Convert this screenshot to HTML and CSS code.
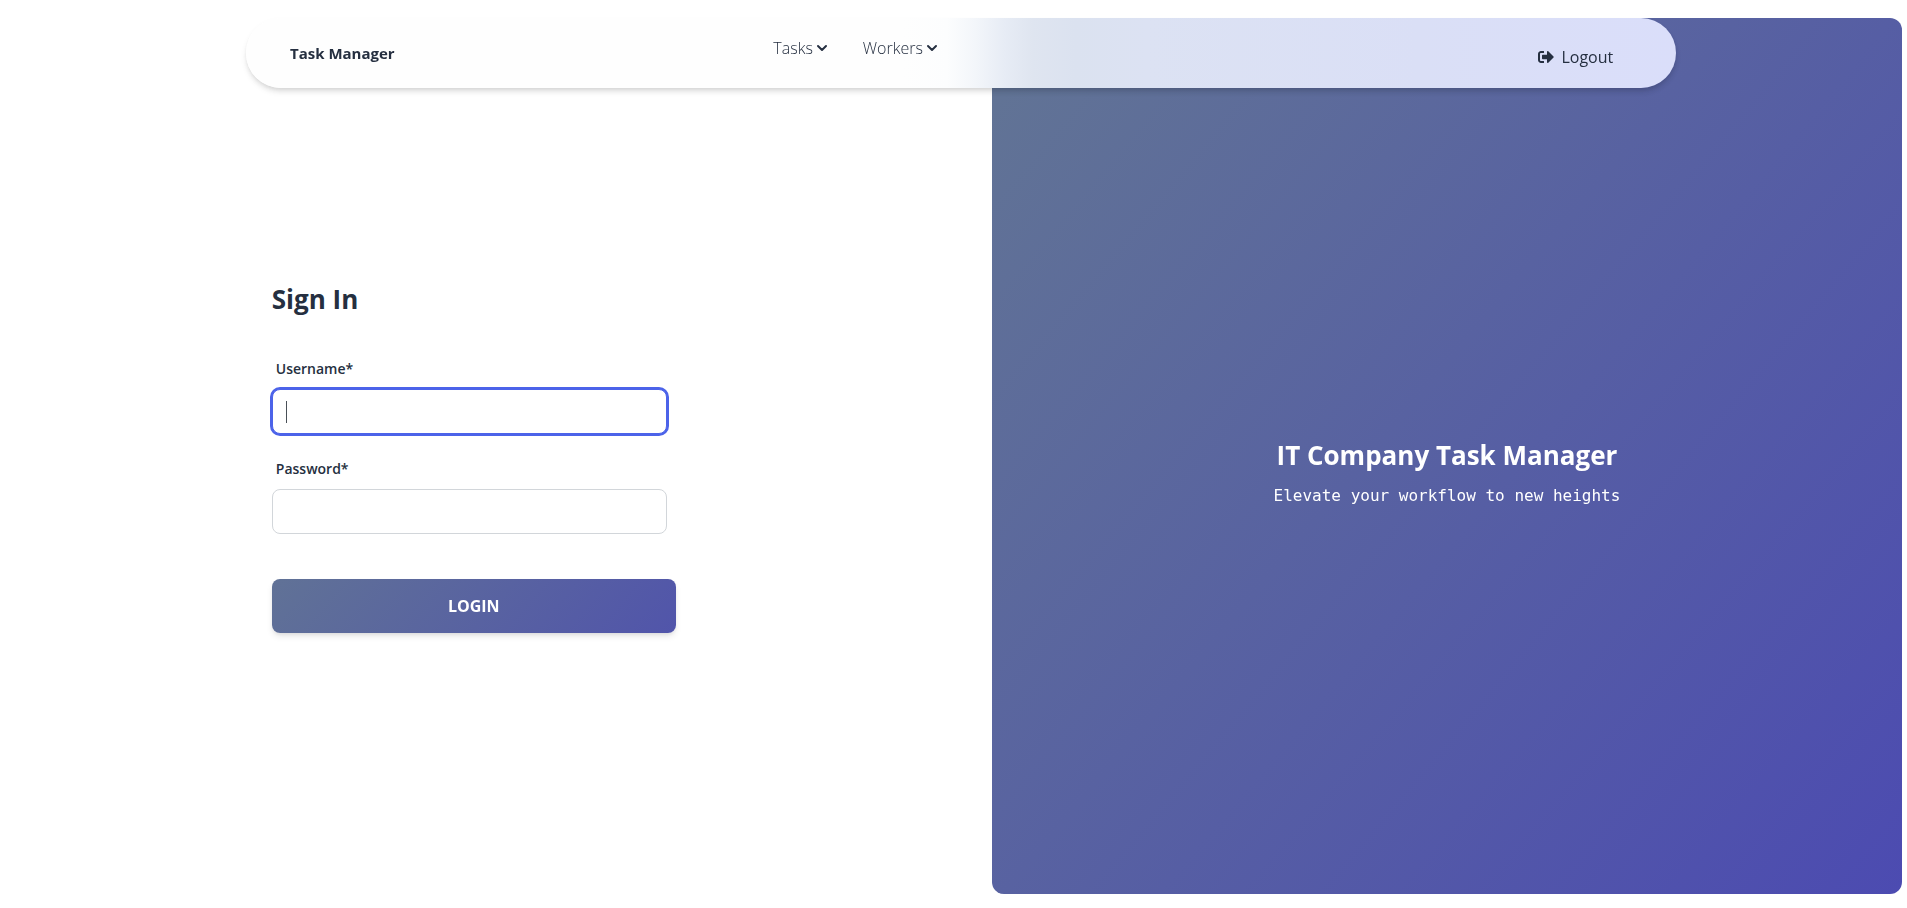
FILE: index.html
```html
<!DOCTYPE html>
<html lang="en">
<head>
  <meta charset="utf-8">
  <meta name="viewport" content="width=device-width, initial-scale=1">
  <title>Task Manager – Sign In</title>
  <link rel="stylesheet" href="styles.css">
</head>
<body>
  <header class="navbar">
    <a class="brand" href="#">Task Manager</a>
    <nav class="menu" aria-label="Main">
      <button class="menu-item" type="button">Tasks
        <svg class="chevron" viewBox="0 0 12 8" aria-hidden="true"><path d="M2 2 6 6l4-4"/></svg>
      </button>
      <button class="menu-item" type="button">Workers
        <svg class="chevron" viewBox="0 0 12 8" aria-hidden="true"><path d="M2 2 6 6l4-4"/></svg>
      </button>
    </nav>
    <a class="logout" href="#">
      <svg class="logout-icon" viewBox="0 0 512 512" aria-hidden="true"><path d="M497 273 329 441c-15 15-41 4.500-41-17v-96H152c-13.300 0-24-10.700-24-24v-96c0-13.300 10.700-24 24-24h136V88c0-21.400 25.900-32 41-17l168 168c9.300 9.400 9.300 24.600 0 34zM192 436v-40c0-6.600-5.400-12-12-12H96c-17.700 0-32-14.300-32-32V160c0-17.700 14.300-32 32-32h84c6.600 0 12-5.400 12-12V76c0-6.600-5.400-12-12-12H96c-53 0-96 43-96 96v192c0 53 43 96 96 96h84c6.600 0 12-5.400 12-12z"/></svg>
      Logout
    </a>
  </header>
  <main class="page">
    <section class="signin">
      <h1 class="title">Sign In</h1>
      <form class="form">
        <label class="label" for="username">Username*</label>
        <input class="field" id="username" type="text" autocomplete="off" autofocus>
        <label class="label" for="password">Password*</label>
        <input class="field" id="password" type="password" autocomplete="off">
        <button class="login" type="submit">LOGIN</button>
      </form>
    </section>
    <aside class="hero">
      <h2 class="hero-title">IT Company Task Manager</h2>
      <p class="hero-text">Elevate your workflow to new heights</p>
    </aside>
  </main>
</body>
</html>
```
FILE: styles.css
```css
* {
  box-sizing: border-box;
}

body {
  margin: 0;
  background: #fff;
  color: #252f40;
  font-family: "Open Sans", sans-serif;
  font-size: 16px;
  line-height: 24px;
}

h1, h2, p {
  margin: 0;
}

a {
  color: inherit;
  text-decoration: none;
}

button, input {
  font: inherit;
  color: inherit;
}

.navbar {
  position: absolute;
  top: 18px;
  left: 12.9%;
  z-index: 2;
  width: 75%;
  height: 70px;
  padding: 0 63px 0 44px;
  display: grid;
  grid-template-columns: 1fr auto 1fr;
  align-items: center;
  border-radius: 35px;
  background: linear-gradient(90deg, #fefefe 46%, #fcfdfe 49%, #f3f6fa 51%, #e7ecf5 53%, #dfe5f0 55%, #dbe2f0 58%, #dce2f3 63%, #dadff6 82%, #dadefa);
  box-shadow: 0 4px 7px -1px rgba(0, 0, 0, 0.11), 0 2px 4px -1px rgba(0, 0, 0, 0.07), 0 4px 6px rgba(0, 0, 0, 0.04);
}

.brand {
  font-size: 15px;
  font-weight: 700;
}

.menu {
  display: flex;
  gap: 35px;
  padding: 0 192px 10px 0;
}

.menu-item {
  display: flex;
  align-items: center;
  gap: 3px;
  padding: 0;
  border: 0;
  background: none;
  font-weight: 300;
}

.chevron {
  width: 12px;
  height: 8px;
  fill: none;
  stroke: #252f40;
  stroke-width: 2;
  stroke-linecap: round;
  stroke-linejoin: round;
}

.logout {
  display: flex;
  align-items: center;
  justify-self: end;
  gap: 7px;
  padding-top: 8px;
}

.logout-icon {
  width: 16px;
  height: 16px;
  fill: #252f40;
}

.page {
  display: grid;
  grid-template-columns: 1fr 47.85%;
  min-height: 100vh;
  padding: 18px 5px 14px 0;
}

.signin {
  display: flex;
  flex-direction: column;
  justify-content: center;
  gap: 40px;
  width: 404px;
  margin-left: 27.4%;
  padding-top: 2px;
}

.title {
  font-size: 26px;
  line-height: 36px;
  font-weight: 700;
}

.form {
  display: flex;
  flex-direction: column;
}

.label {
  margin: 0 0 8px 4px;
  font-size: 14px;
  font-weight: 600;
}

.field {
  width: 395px;
  height: 45px;
  margin-bottom: 23px;
  padding: 8px 13px;
  border: 1px solid #d2d6da;
  border-radius: 8px;
  background: #fff;
  outline: none;
}

.field:focus {
  border-color: #4c63e9;
  background: linear-gradient(#495057, #495057) 13px center / 1px 22px no-repeat #fff;
  box-shadow: 0 0 0 2px #4c63e9;
  caret-color: transparent;
}

.login {
  height: 54px;
  margin-top: 22px;
  border: 0;
  border-radius: 8px;
  background: linear-gradient(310deg, #4c4bb1, #627594) 25% 0 / 150%;
  box-shadow: 0 4px 7px -1px rgba(0, 0, 0, 0.11), 0 2px 4px -1px rgba(0, 0, 0, 0.07);
  color: #fff;
  font-weight: 700;
}

.hero {
  display: flex;
  flex-direction: column;
  align-items: center;
  justify-content: center;
  gap: 11px;
  padding-top: 32px;
  border-radius: 12px;
  background: linear-gradient(310deg, #4c4bb1, #627594);
  color: #fff;
}

.hero-title {
  font-size: 26px;
  line-height: 36px;
  font-weight: 700;
}

.hero-text {
  font-family: "DejaVu Sans Mono", monospace;
}
```
